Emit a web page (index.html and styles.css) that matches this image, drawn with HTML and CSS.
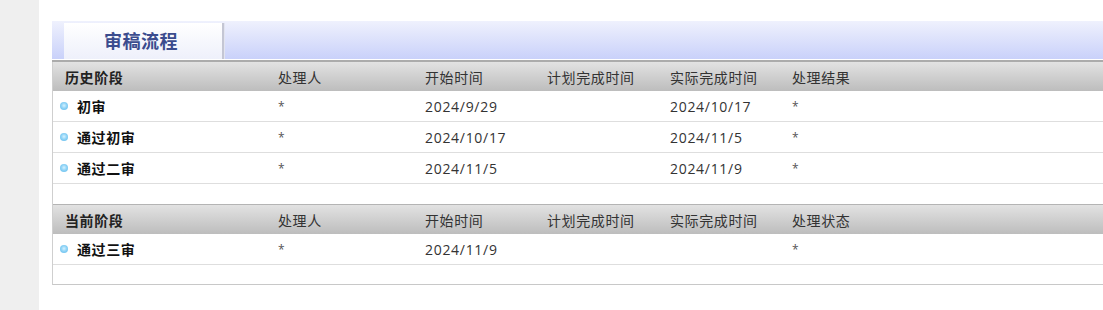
FILE: index.html
```html
<!DOCTYPE html>
<html lang="zh-CN">
<head>
<meta charset="utf-8">
<title>审稿流程</title>
<link rel="stylesheet" href="styles.css">
</head>
<body>
<div class="page">
  <aside class="side"></aside>
  <main class="main">
    <div class="tabbar">
      <div class="tab">审稿流程</div>
    </div>
    <div class="rule"></div>
    <div class="flow">
      <div class="row head">
        <div class="c c1">历史阶段</div>
        <div class="c c2">处理人</div>
        <div class="c c3">开始时间</div>
        <div class="c c4">计划完成时间</div>
        <div class="c c5">实际完成时间</div>
        <div class="c c6">处理结果</div>
      </div>
      <div class="row">
        <div class="c c1 stage"><span class="dot"></span>初审</div>
        <div class="c c2 mark">*</div>
        <div class="c c3 num">2024/9/29</div>
        <div class="c c4 num"></div>
        <div class="c c5 num">2024/10/17</div>
        <div class="c c6 mark">*</div>
      </div>
      <div class="row">
        <div class="c c1 stage"><span class="dot"></span>通过初审</div>
        <div class="c c2 mark">*</div>
        <div class="c c3 num">2024/10/17</div>
        <div class="c c4 num"></div>
        <div class="c c5 num">2024/11/5</div>
        <div class="c c6 mark">*</div>
      </div>
      <div class="row">
        <div class="c c1 stage"><span class="dot"></span>通过二审</div>
        <div class="c c2 mark">*</div>
        <div class="c c3 num">2024/11/5</div>
        <div class="c c4 num"></div>
        <div class="c c5 num">2024/11/9</div>
        <div class="c c6 mark">*</div>
      </div>
      <div class="spacer"></div>
      <div class="row head">
        <div class="c c1">当前阶段</div>
        <div class="c c2">处理人</div>
        <div class="c c3">开始时间</div>
        <div class="c c4">计划完成时间</div>
        <div class="c c5">实际完成时间</div>
        <div class="c c6">处理状态</div>
      </div>
      <div class="row">
        <div class="c c1 stage"><span class="dot"></span>通过三审</div>
        <div class="c c2 mark">*</div>
        <div class="c c3 num">2024/11/9</div>
        <div class="c c4 num"></div>
        <div class="c c5 num"></div>
        <div class="c c6 mark">*</div>
      </div>
      <div class="spacer last"></div>
    </div>
  </main>
</div>
</body>
</html>
```
FILE: styles.css
```css
html, body {
  margin: 0;
  padding: 0;
  background: #fff;
  overflow: hidden;
}

body {
  font-family: "Noto Sans CJK SC", "Microsoft YaHei", sans-serif;
  font-size: 14px;
  color: #333;
}

.page {
  display: flex;
  height: 310px;
}

.side {
  width: 39px;
  flex: none;
  background: #efefef;
}

.main {
  flex: none;
  width: 1070px;
  padding: 21px 0 0 13px;
}

/* tab strip */
.tabbar {
  height: 38px;
  background: linear-gradient(#eff1fd, #c9d1fa);
  display: flex;
  align-items: flex-end;
  padding-left: 12px;
  border-bottom: 1px solid #fff;
}

.tab {
  width: 160px;
  height: 36px;
  box-sizing: border-box;
  background: linear-gradient(#ffffff, #eef0fb);
  border-right: 2px solid #c4c6d4;
  box-shadow: 1px 0 0 #e2e4f0;
  color: #3b4c8e;
  font-size: 18px;
  font-weight: bold;
  display: flex;
  align-items: center;
  justify-content: center;
  letter-spacing: 0.5px;
  padding: 0 4px 2px 0;
}

.rule {
  height: 2px;
  background: #ababab;
}

/* flow table */
.flow {
  border-left: 1px solid #cfcfcf;
  border-bottom: 1px solid #c8c8c8;
}

.row {
  display: flex;
  align-items: center;
  border-bottom: 1px solid #dedede;
  box-sizing: border-box;
  height: 31px;
  letter-spacing: 0.6px;
}

.row.head {
  height: 29px;
  border-bottom: none;
  background: linear-gradient(#e2e2e2, #bdbdbd);
  color: #333;
}

.row.head .c1 {
  font-weight: bold;
  color: #222;
}

.c {
  flex: none;
  white-space: nowrap;
  padding-left: 12px;
  box-sizing: border-box;
}

.c1 { width: 213px; }
.c2 { width: 147px; }
.c3 { width: 122px; }
.c4 { width: 123px; }
.c5 { width: 122px; }
.c6 { flex: 1; }

.num {
  font-family: "Open Sans", "Noto Sans CJK SC", sans-serif;
  font-size: 14px;
  letter-spacing: 0.7px;
  color: #333;
}

.mark {
  font-family: "Open Sans", sans-serif;
  font-size: 12px;
  color: #555;
  letter-spacing: 0;
}

.stage {
  font-weight: bold;
  color: #111;
  display: flex;
  align-items: center;
  padding-left: 7px;
}

.dot {
  width: 8px;
  height: 8px;
  border-radius: 50%;
  margin-right: 9px;
  background: radial-gradient(circle at 50% 45%, #d6f2ff 0, #8fd3f6 45%, #5cb8ea 100%);
}

.spacer {
  height: 20px;
  border-bottom: 1px solid #b4b4b4;
}

.spacer.last {
  height: 19px;
  border-bottom: none;
}
```
